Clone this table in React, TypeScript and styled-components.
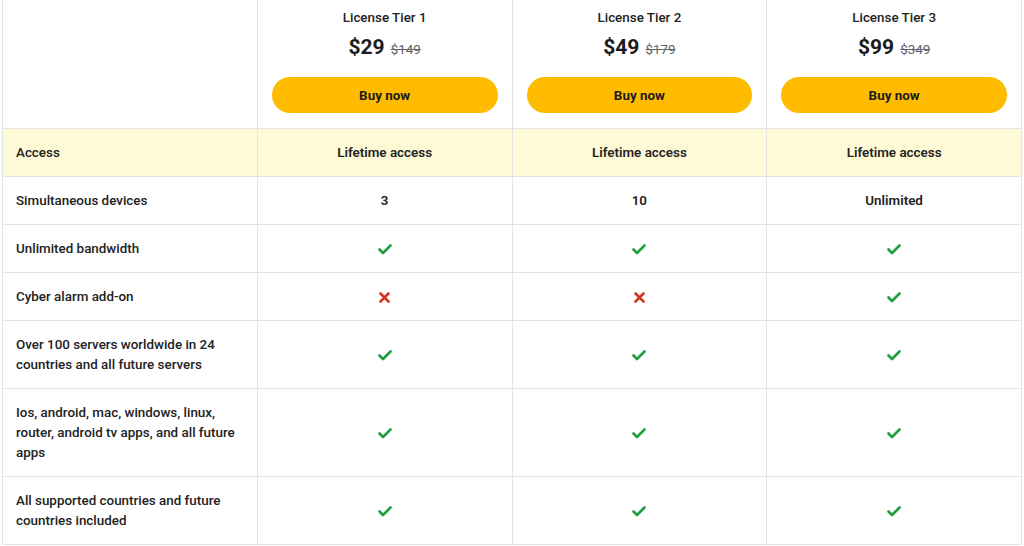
import { FC, Fragment } from 'react';
import styled, { createGlobalStyle } from 'styled-components';

type Value = string | boolean;

interface Feature {
  label: string;
  values: Value[];
  highlight?: boolean;
}

interface Tier {
  name: string;
  price: string;
  oldPrice: string;
}

const tiers: Tier[] = [
  { name: 'License Tier 1', price: '$29', oldPrice: '$149' },
  { name: 'License Tier 2', price: '$49', oldPrice: '$179' },
  { name: 'License Tier 3', price: '$99', oldPrice: '$349' },
];

const features: Feature[] = [
  { label: 'Access', values: ['Lifetime access', 'Lifetime access', 'Lifetime access'], highlight: true },
  { label: 'Simultaneous devices', values: ['3', '10', 'Unlimited'] },
  { label: 'Unlimited bandwidth', values: [true, true, true] },
  { label: 'Cyber alarm add-on', values: [false, false, true] },
  { label: 'Over 100 servers worldwide in 24 countries and all future servers', values: [true, true, true] },
  {
    label: 'Ios, android, mac, windows, linux, router, android tv apps, and all future apps',
    values: [true, true, true],
  },
  { label: 'All supported countries and future countries included', values: [true, true, true] },
];

const GlobalStyle = createGlobalStyle`
  body {
    margin: 0;
    background: #ffffff;
    font-family: Roboto, "Liberation Sans", sans-serif;
    color: #222222;
  }
`;

const Page = styled.div`
  padding: 0 2px;
  width: 1024px;
  box-sizing: border-box;
`;

const Table = styled.div`
  display: grid;
  grid-template-columns: repeat(4, 1fr);
  border-left: 1px solid #e3e4e8;
`;

const Cell = styled.div<{ $highlight?: boolean; $center?: boolean }>`
  display: flex;
  align-items: center;
  justify-content: ${({ $center }) => ($center ? 'center' : 'flex-start')};
  text-align: ${({ $center }) => ($center ? 'center' : 'left')};
  padding: 14px 13px 13px;
  font-size: 13.4px;
  line-height: 20px;
  font-weight: ${({ $center }) => ($center ? 600 : 500)};
  background: ${({ $highlight }) => ($highlight ? '#fffad6' : '#ffffff')};
  border-right: 1px solid #e3e4e8;
  border-bottom: 1px solid #e3e4e8;
`;

const HeaderCell = styled.div`
  display: flex;
  flex-direction: column;
  align-items: center;
  padding: 8px 14px 15px;
  border-right: 1px solid #e3e4e8;
  border-bottom: 1px solid #e3e4e8;
`;

const TierName = styled.div`
  font-size: 13.4px;
  line-height: 20px;
  font-weight: 500;
  color: #222;
`;

const PriceRow = styled.div`
  display: flex;
  align-items: baseline;
  gap: 6px;
  margin-top: 5px;
  height: 28px;
  line-height: 28px;
`;

const Price = styled.span`
  font-size: 21px;
  font-weight: 700;
  color: #1c1c1c;
`;

const OldPrice = styled.span`
  font-size: 13.4px;
  color: #5f6368;
  text-decoration: line-through;
`;

const BuyButton = styled.button`
  margin-top: 16px;
  width: 100%;
  height: 36px;
  border: none;
  border-radius: 18px;
  background: #ffbb00;
  font-family: Roboto, "Liberation Sans", sans-serif;
  font-size: 13.4px;
  font-weight: 700;
  color: #1c1c1c;
  cursor: pointer;
`;

const Check: FC = () => (
  <svg width="14" height="11" viewBox="0 0 14 11">
    <path d="M1.5 5.5 L5 9 L12.5 1.5" fill="none" stroke="#1e9e3e" strokeWidth="2.6" strokeLinecap="round" strokeLinejoin="round" />
  </svg>
);

const Cross: FC = () => (
  <svg width="11" height="11" viewBox="0 0 11 11">
    <path d="M1.5 1.5 L9.5 9.5 M9.5 1.5 L1.5 9.5" fill="none" stroke="#d2381d" strokeWidth="2.6" strokeLinecap="round" />
  </svg>
);

const renderValue = (v: Value) => {
  if (v === true) return <Check />;
  if (v === false) return <Cross />;
  return v;
};

const App: FC = () => (
  <Page>
    <GlobalStyle />
    <Table>
      <HeaderCell />
      {tiers.map((t) => (
        <HeaderCell key={t.name}>
          <TierName>{t.name}</TierName>
          <PriceRow>
            <Price>{t.price}</Price>
            <OldPrice>{t.oldPrice}</OldPrice>
          </PriceRow>
          <BuyButton>Buy now</BuyButton>
        </HeaderCell>
      ))}
      {features.map((f) => (
        <Fragment key={f.label}>
          <Cell $highlight={f.highlight}>{f.label}</Cell>
          {f.values.map((v, i) => (
            <Cell key={i} $highlight={f.highlight} $center>
              {renderValue(v)}
            </Cell>
          ))}
        </Fragment>
      ))}
    </Table>
  </Page>
);

export default App;
